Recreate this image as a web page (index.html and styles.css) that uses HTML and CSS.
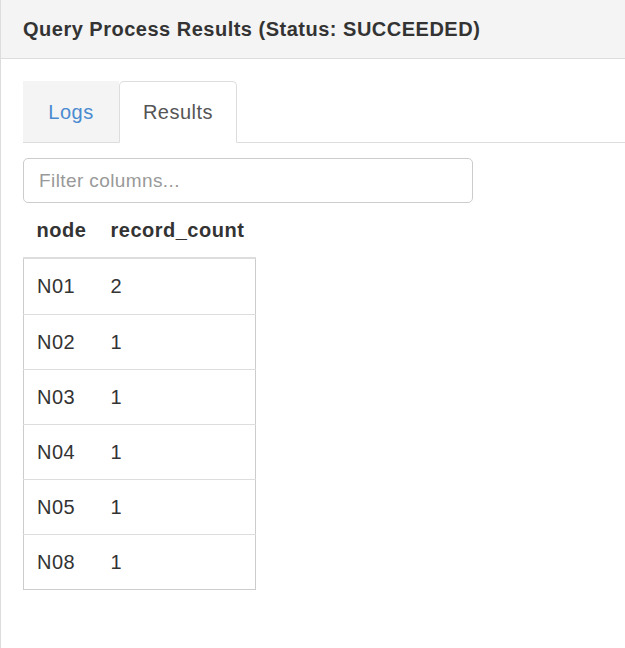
FILE: index.html
```html
<!DOCTYPE html>
<html>
<head>
<meta charset="utf-8">
<link rel="stylesheet" href="styles.css">
</head>
<body>
<div class="panel">
  <div class="panel-heading">
    <h3 class="panel-title">Query Process Results (Status: SUCCEEDED)</h3>
  </div>
  <div class="panel-body">
    <ul class="tabs">
      <li class="tab"><a href="#" class="tab-link">Logs</a></li>
      <li class="tab active"><a href="#" class="tab-link">Results</a></li>
    </ul>
    <input class="filter" type="text" placeholder="Filter columns...">
    <table class="results">
      <thead>
        <tr><th class="c1">node</th><th class="c2">record_count</th></tr>
      </thead>
      <tbody>
        <tr><td>N01</td><td>2</td></tr>
        <tr><td>N02</td><td>1</td></tr>
        <tr><td>N03</td><td>1</td></tr>
        <tr><td>N04</td><td>1</td></tr>
        <tr><td>N05</td><td>1</td></tr>
        <tr><td>N08</td><td>1</td></tr>
      </tbody>
    </table>
  </div>
</div>
</body>
</html>
```
FILE: styles.css
```css
html, body {
  margin: 0;
  padding: 0;
  background: #fff;
  font-family: "Liberation Sans", Arial, sans-serif;
  color: #333;
  letter-spacing: 0.5px;
}
.panel {
  width: 100%;
  height: 648px;
  border-left: 1px solid #ddd;
  box-sizing: border-box;
  overflow: hidden;
}
.panel-heading {
  height: 58px;
  background: #f4f4f4;
  border-bottom: 1px solid #ddd;
  display: flex;
  align-items: center;
  padding-left: 22px;
}
.panel-title {
  margin: 0;
  font-size: 20px;
  font-weight: bold;
  color: #333;
}
.panel-body {
  padding: 22px 0 0 22px;
}
.tabs {
  list-style: none;
  margin: 0;
  padding: 0;
  display: flex;
  height: 61px;
  border-bottom: 1px solid #ddd;
}
.tab {
  display: flex;
}
.tab-link {
  display: flex;
  align-items: center;
  justify-content: center;
  font-size: 20px;
  text-decoration: none;
  color: #4a8bd0;
  background: #f4f4f4;
  width: 96px;
  box-sizing: border-box;
  border: 1px solid transparent;
  border-bottom: none;
}
.tab.active .tab-link {
  background: #fff;
  color: #555;
  width: 118px;
  border: 1px solid #ddd;
  border-bottom: 1px solid #fff;
  margin-bottom: -1px;
  border-radius: 5px 5px 0 0;
}
.filter {
  display: block;
  margin-top: 15px;
  width: 450px;
  height: 45px;
  box-sizing: border-box;
  border: 1px solid #ccc;
  border-radius: 5px;
  padding: 0 15px;
  font-family: "Liberation Sans", Arial, sans-serif;
  font-size: 19px;
  letter-spacing: 0.4px;
  color: #555;
}
.filter::placeholder {
  color: #999;
}
.results {
  border-collapse: collapse;
  width: 233px;
  font-size: 20px;
}
.results th {
  text-align: left;
  font-weight: bold;
  height: 54px;
  padding: 0 0 0 13px;
  color: #333;
}
.results th.c1 {
  width: 61px;
}
.results tbody {
  border: 1px solid #ccc;
}
.results tbody tr:first-child td {
  border-top: 2px solid #ddd;
  height: 55px;
}
.results td {
  height: 54px;
  padding: 0 0 0 13px;
  border-top: 1px solid #ddd;
  color: #333;
}
```
